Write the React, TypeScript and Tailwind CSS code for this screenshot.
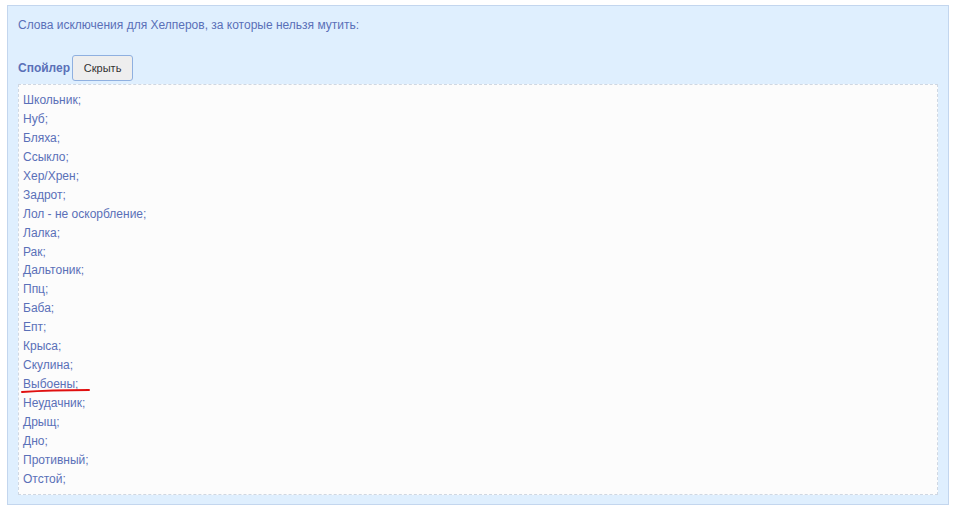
import React from "react";

const words = ["Школьник;","Нуб;","Бляха;","Ссыкло;","Хер/Хрен;","Задрот;","Лол - не оскорбление;","Лалка;","Рак;","Дальтоник;","Ппц;","Баба;","Епт;","Крыса;","Скулина;","Выбоены;","Неудачник;","Дрыщ;","Дно;","Противный;","Отстой;"];

export default function App() {
  return (
    <div className="w-[961px] h-[517px] bg-white pt-[5px] pl-[7px] text-[12px] text-[#5a70b8]" style={{ fontFamily: '"Liberation Sans", Arial, sans-serif' }}>
      <div className="w-[942px] h-[500px] bg-[#dfeffe] border border-[#c3d6ee] pt-[12px] px-[10px]">
        <div className="leading-[14px]">Слова исключения для Хелперов, за которые нельзя мутить:</div>
        <div className="flex items-center mt-[23px] h-[26px]">
          <span className="font-bold">Спойлер</span>
          <button className="ml-[2px] w-[61px] h-[26px] bg-[#eeeeee] border border-[#8fb0e0] rounded-[3px] text-[11px] text-[#333]">Скрыть</button>
        </div>
        <div className="mt-[3px] w-[920px] h-[411px] bg-[#fcfcfc] border border-dashed border-[#cfd7e2] pt-[6px] px-[4px]">
          {words.map((w) => (
            <div key={w} className="h-[18.95px] leading-[19px] relative">
              {w}
              {w === "Выбоены;" && (
                <svg className="absolute left-[-2px] top-[13px]" width="70" height="6" viewBox="0 0 70 6">
                  <path d="M1 4 Q30 2 68 2" stroke="#e01010" strokeWidth="2" fill="none" strokeLinecap="round" />
                </svg>
              )}
            </div>
          ))}
        </div>
      </div>
    </div>
  );
}
